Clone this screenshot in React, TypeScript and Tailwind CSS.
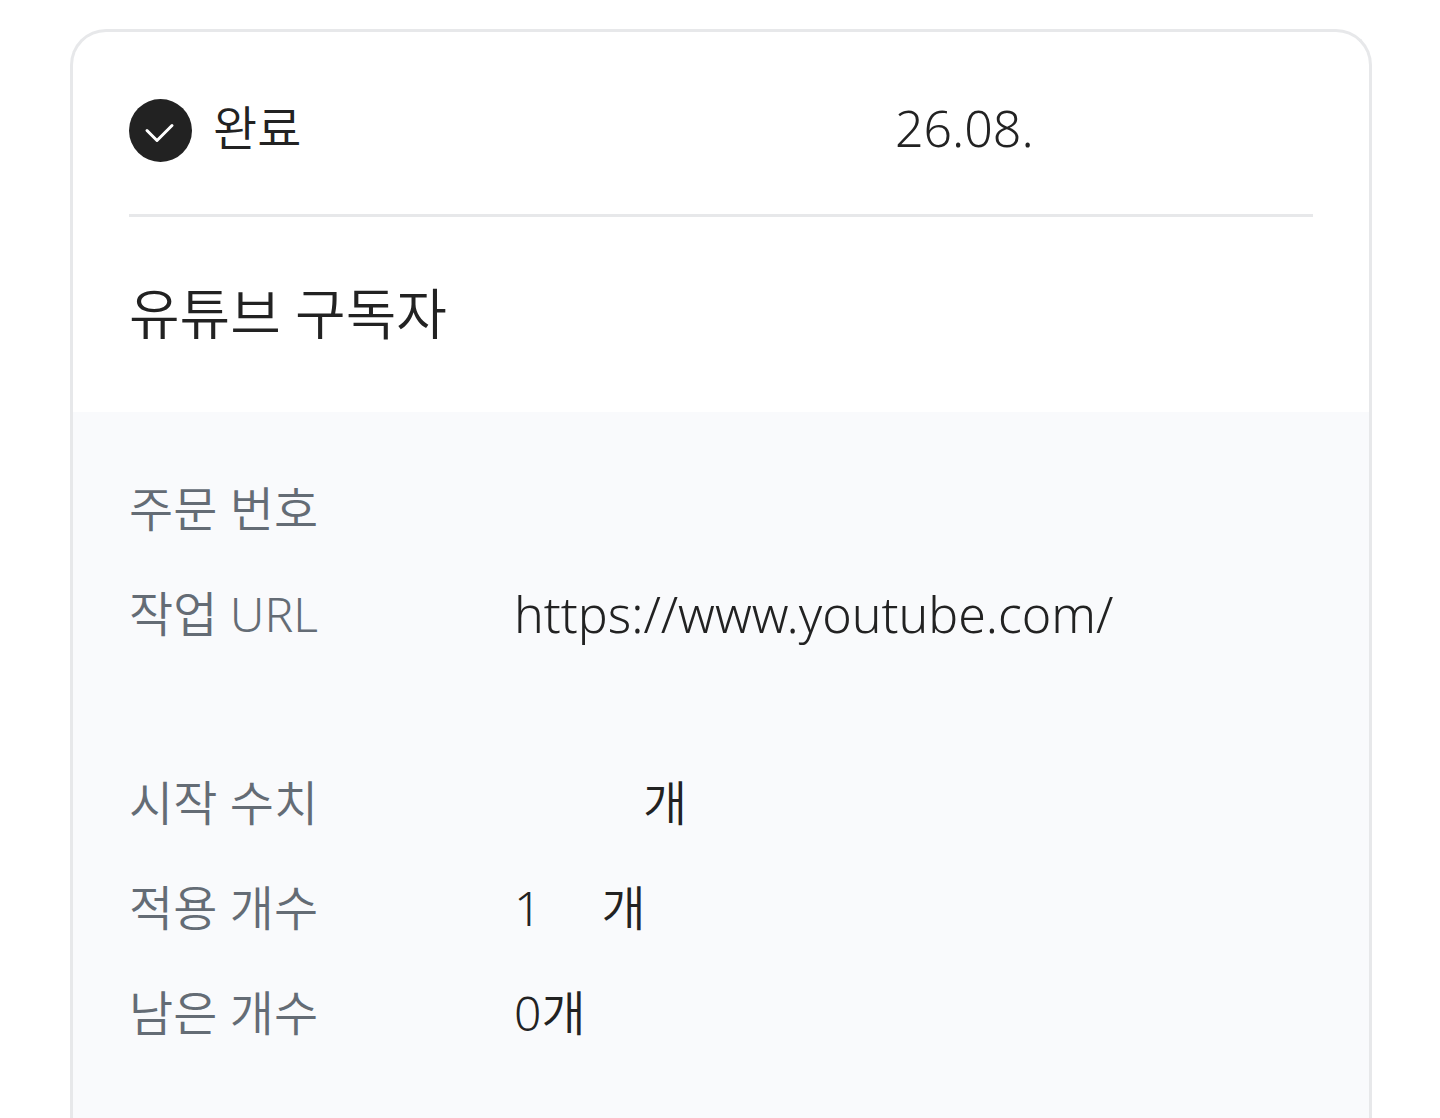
const details = [
    { label: "주문 번호", value: "" },
    { label: "작업 URL", value: "https://www.youtube.com/", tall: true },
    { label: "시작 수치", value: "개", indent: "pl-[129px]" },
    { label: "적용 개수", value: "1", unit: "개" },
    { label: "남은 개수", value: "0개" },
];

export default function App() {
    return (
        <div className="h-screen overflow-hidden bg-white pl-[70px] pr-[68px] pt-[29px] font-['Noto_Sans','Noto_Sans_CJK_KR',sans-serif] font-[350] text-[#222]">
            <article className="min-h-screen overflow-hidden rounded-t-[36px] border-[3px] border-b-0 border-[#e7e8ea] bg-white">
                <div className="px-14">
                    <header className="flex h-[185px] items-center border-b-[3px] border-[#e7e8ea] pt-[14px]">
                        <CheckBadge />
                        <div className="flex flex-1 pb-1 pl-[21px] text-[48px] leading-[72px]">
                            <span className="flex-1">완료</span>
                            <time className="w-[418px] text-[50px]">26.08.</time>
                        </div>
                    </header>
                    <h1 className="pb-[61px] pt-[58px] text-[55px] leading-[76px]">유튜브 구독자</h1>
                </div>

                <dl className="min-h-screen bg-[#f9fafc] px-14 pt-[61px] text-[48px] leading-[72px]">
                    {details.map((row) => (
                        <div key={row.label} className={`mb-[33px] flex ${row.tall ? "min-h-[156px]" : "min-h-[72px]"}`}>
                            <dt className="w-[385px] shrink-0 text-[#646c75]">{row.label}</dt>
                            <dd className={`flex gap-[60px] ${row.tall ? "text-[50px]" : ""} ${row.indent ?? ""}`}>
                                <span>{row.value}</span>
                                {row.unit && <span>{row.unit}</span>}
                            </dd>
                        </div>
                    ))}
                </dl>
            </article>
        </div>
    );
}

function CheckBadge() {
    return (
        <svg viewBox="0 0 63 63" fill="none" className="size-[63px] shrink-0" aria-hidden="true">
            <circle cx="31.5" cy="31.5" r="31.5" fill="#222" />
            <path d="M18 31.5L28 41.5L43 26.5" stroke="white" strokeWidth="3" strokeLinecap="round" strokeLinejoin="round" />
        </svg>
    );
}
